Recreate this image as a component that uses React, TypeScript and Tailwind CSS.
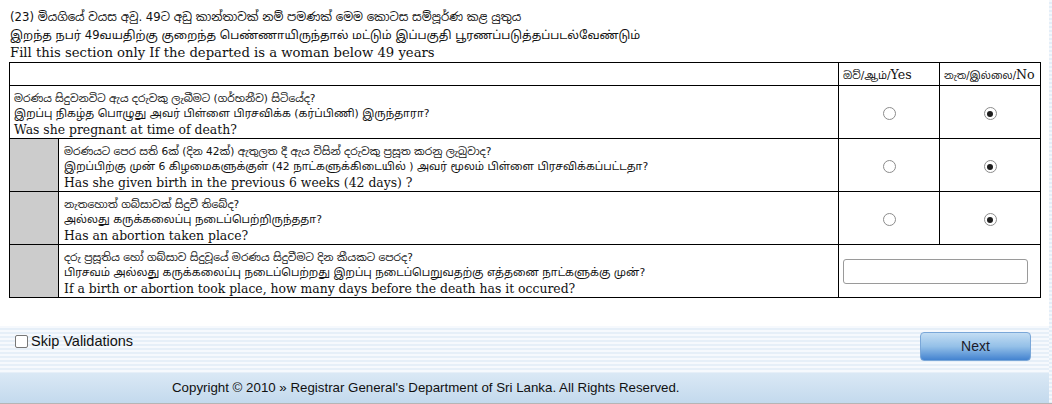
import React from "react";

const SANS = "font-['DejaVu_Sans','Noto_Sans_Sinhala','Noto_Sans_Tamil','Noto_Sans',sans-serif]";
const SERIF = "font-['DejaVu_Serif','Noto_Sans_Sinhala','Noto_Sans_Tamil',serif]";

function Radio({ checked }: { checked?: boolean }) {
  return (
    <span className="inline-flex h-[13px] w-[13px] items-center justify-center rounded-full border border-[#8c8c8c] bg-white align-middle">
      {checked && <span className="h-[6px] w-[6px] rounded-full bg-[#1e1e1e]" />}
    </span>
  );
}

type Q = { si: string; ta: string; en: string; grey: boolean; kind: "radio" | "input" };

const questions: Q[] = [
  {
    si: "මරණය සිදුවනවිට ඇය දරුවකු ලැබීමට (ගර්භනීව) සිටියේද?",
    ta: "இறப்பு நிகழ்த பொழுது அவர் பிள்ளை பிரசவிக்க (கர்ப்பிணி) இருந்தாரா?",
    en: "Was she pregnant at time of death?",
    grey: false,
    kind: "radio",
  },
  {
    si: "මරණයට පෙර සති 6ක් (දින 42ක්) ඇතුලත දී ඇය විසින් දරුවකු ප්‍රසූත කරනු ලැබුවාද?",
    ta: "இறப்பிற்கு முன் 6 கிழமைகளுக்குள் (42 நாட்களுக்கிடையில் ) அவர் மூலம் பிள்ளை பிரசவிக்கப்பட்டதா?",
    en: "Has she given birth in the previous 6 weeks (42 days) ?",
    grey: true,
    kind: "radio",
  },
  {
    si: "නැතහොත් ගබ්සාවක් සිදුවී තිබේද?",
    ta: "அல்லது கருக்கலைப்பு நடைப்பெற்றிருந்ததா?",
    en: "Has an abortion taken place?",
    grey: true,
    kind: "radio",
  },
  {
    si: "දරු ප්‍රසූතිය හෝ ගබ්සාව සිදුවූයේ මරණය සිදුවීමට දින කීයකට පෙරද?",
    ta: "பிரசவம் அல்லது கருக்கலைப்பு நடைப்பெற்றது இறப்பு நடைப்பெறுவதற்கு எத்தனை நாட்களுக்கு முன்?",
    en: "If a birth or abortion took place, how many days before the death has it occured?",
    grey: true,
    kind: "input",
  },
];

function QText({ q }: { q: Q }) {
  return (
    <div className="h-[52px] overflow-visible pt-[4px] text-[#111]">
      <div className={`${SANS} h-[16px] overflow-visible whitespace-nowrap text-[10.6px] leading-[16px]`}>{q.si}</div>
      <div className={`${SANS} h-[16px] overflow-visible whitespace-nowrap text-[10.8px] leading-[16px]`}>{q.ta}</div>
      <div className={`${SERIF} h-[16px] overflow-visible whitespace-nowrap text-[12.4px] leading-[16px]`}>{q.en}</div>
    </div>
  );
}

export default function App() {
  return (
    <div className="h-[404px] w-[1052px] overflow-hidden bg-[repeating-linear-gradient(180deg,#f4f8fc_0px,#f4f8fc_2px,#e4eef8_2px,#e4eef8_4px)]">
      <div className="w-[1049px] bg-white">
        <div className="px-[10px] pt-[8px] text-[#111]">
          <div className={`${SANS} h-[18px] whitespace-nowrap text-[11.7px] leading-[18px]`}>
            (23) මියගියේ වයස අවු. 49ට අඩු කාන්තාවක් නම් පමණක් මෙම කොටස සම්පූර්ණ කළ යුතුය
          </div>
          <div className={`${SANS} h-[18px] whitespace-nowrap text-[11.6px] leading-[18px]`}>
            இறந்த நபர் 49வயதிற்கு குறைந்த பெண்ணாயிருந்தால் மட்டும் இப்பகுதி பூரணப்படுத்தப்படல்வேண்டும்
          </div>
          <div className={`${SERIF} h-[18px] whitespace-nowrap text-[13.2px] leading-[18px]`}>
            Fill this section only If the departed is a woman below 49 years
          </div>
        </div>
        <div className="pl-[9px]">
          <table className="w-[1031px] table-fixed border-collapse border border-black">
            <colgroup>
              <col className="w-[49px]" />
              <col className="w-[780px]" />
              <col className="w-[101px]" />
              <col className="w-[101px]" />
            </colgroup>
            <tbody>
              <tr className="h-[23px]">
                <td colSpan={2} className="border border-black" />
                <td className="whitespace-nowrap border border-black px-[4px] leading-[16px] text-[#111]">
                  <span className={`${SANS} text-[10.5px]`}>ඔව්/ஆம்/</span>
                  <span className={`${SERIF} text-[12.6px]`}>Yes</span>
                </td>
                <td className="whitespace-nowrap border border-black px-[4px] leading-[16px] text-[#111]">
                  <span className={`${SANS} text-[10px]`}>නැත/இல்லை/</span>
                  <span className={`${SERIF} text-[12.6px]`}>No</span>
                </td>
              </tr>
              {questions.map((q, i) => (
                <tr key={i} className="h-[52px]">
                  {q.grey ? (
                    <>
                      <td className="border border-black bg-[#cccccc]" />
                      <td className="border border-black px-[5px] align-top">
                        <QText q={q} />
                      </td>
                    </>
                  ) : (
                    <td colSpan={2} className="border border-black px-[4px] align-top">
                      <QText q={q} />
                    </td>
                  )}
                  {q.kind === "radio" ? (
                    <>
                      <td className="border border-black text-center">
                        <Radio />
                      </td>
                      <td className="border border-black text-center">
                        <Radio checked />
                      </td>
                    </>
                  ) : (
                    <td colSpan={2} className="border border-black px-[4px]">
                      <div className="h-[25px] w-[185px] rounded-[3px] border border-[#9a9a9a] bg-white" />
                    </td>
                  )}
                </tr>
              ))}
            </tbody>
          </table>
        </div>
        <div className="h-[28px]" />
      </div>
      <div className="flex h-[47px] w-[1049px] items-start justify-between bg-[repeating-linear-gradient(180deg,#f6f9fd_0px,#f6f9fd_2px,#e6eff8_2px,#e6eff8_4px)] pl-[15px] pr-[18px]">
        <label className="mt-[5px] flex items-center gap-[3px] font-['Liberation_Sans',Arial,sans-serif] text-[14.5px] text-[#111]">
          <span className="h-[13px] w-[13px] rounded-[2px] border border-[#777] bg-white" />
          Skip Validations
        </label>
        <button className="mt-[6px] h-[29px] w-[111px] rounded-[4px] border border-[#7aa7d8] bg-[linear-gradient(180deg,#c3ddf3_0%,#94c0e8_50%,#4383d0_100%)] font-['Liberation_Sans',Arial,sans-serif] text-[14px] text-[#1b1b2b]">
          Next
        </button>
      </div>
      <div className="flex h-[30px] w-[1049px] items-center bg-[linear-gradient(180deg,#dae8f5_0%,#c3d9ed_100%)] pl-[172px] font-['Liberation_Sans',Arial,sans-serif] text-[13.3px] text-[#111]">
        Copyright © 2010 » Registrar General's Department of Sri Lanka. All Rights Reserved.
      </div>
      <div className="h-[2px] w-[1052px] bg-[#b5b5b5]" />
    </div>
  );
}
